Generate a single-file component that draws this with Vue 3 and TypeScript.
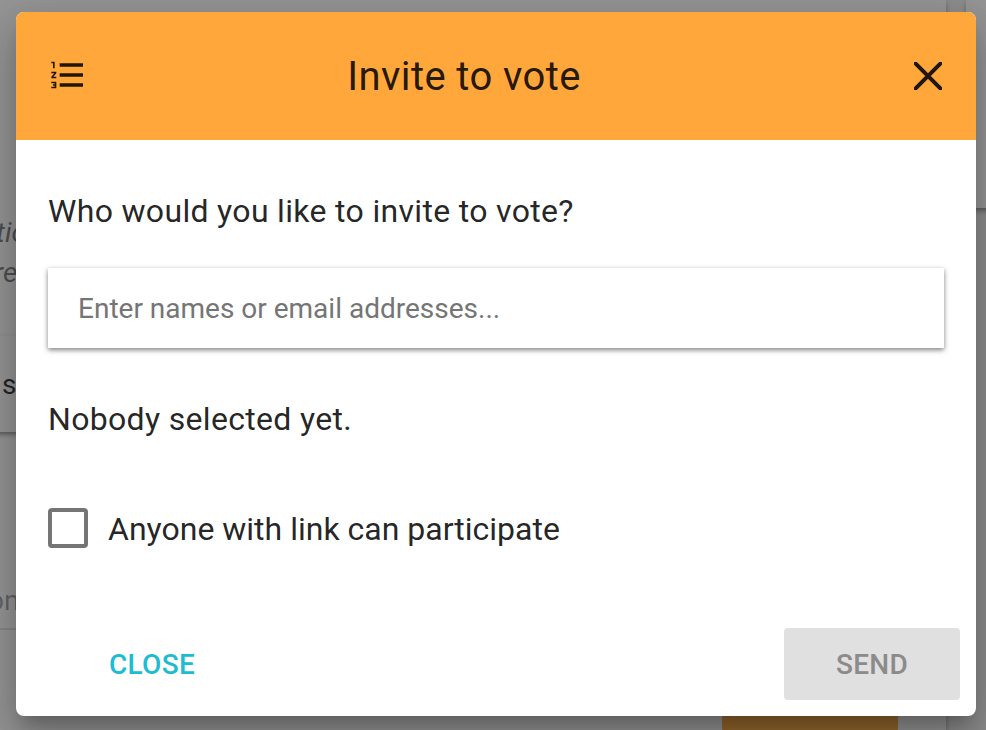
<script setup lang="ts">
import { ref } from 'vue'

const query = ref('')
const anyoneWithLink = ref(false)
</script>

<template>
  <main class="screen">
    <div class="page" aria-hidden="true">
      <section class="panel panel-main">
        <span class="snippet italic line-one">tio</span>
        <span class="snippet italic line-two">re</span>
        <div class="inner-card"><span>s</span></div>
        <div class="field">on</div>
        <div class="page-button"></div>
      </section>
      <section class="panel panel-side"></section>
    </div>
    <div class="backdrop"></div>

    <section class="dialog" role="dialog" aria-labelledby="dialog-title">
      <header class="toolbar">
        <svg class="list-icon" viewBox="0 0 24 24" aria-hidden="true">
          <path d="M2 17h2v.5H3v1h1v.5H2v1h3v-4H2v1zm1-9h1V4H2v1h1v3zm-1 3h1.8L2 13.1v.9h3v-1H3.2L5 10.9V10H2v1zm5-6v2h14V5H7zm0 14h14v-2H7v2zm0-6h14v-2H7v2z" />
        </svg>
        <h2 id="dialog-title">Invite to vote</h2>
        <button class="close-icon" type="button" aria-label="Close">
          <svg viewBox="0 0 28 28"><path d="M1.2 1.2 26.8 26.8M26.8 1.2 1.2 26.8" /></svg>
        </button>
      </header>

      <div class="content">
        <p class="question">Who would you like to invite to vote?</p>
        <input v-model="query" class="search" type="text" placeholder="Enter names or email addresses..." />
        <p class="selection">Nobody selected yet.</p>
        <label class="option">
          <input v-model="anyoneWithLink" type="checkbox" />
          <span>Anyone with link can participate</span>
        </label>
      </div>

      <footer class="actions">
        <button class="close" type="button">CLOSE</button>
        <button class="send" type="button" disabled>SEND</button>
      </footer>
    </section>
  </main>
</template>

<style>
body {
  margin: 0;
  overflow: hidden;
}
</style>

<style scoped>
.screen {
  position: relative;
  box-sizing: border-box;
  width: 986px;
  height: 730px;
  padding: 12px 10px 14px 16px;
  overflow: hidden;
  background: #fafafa;
  font-family: Roboto, sans-serif;
  color: rgba(0, 0, 0, 0.87);
}

.page,
.backdrop {
  position: absolute;
  inset: 0;
}

.page {
  display: flex;
  gap: 20px;
  background: #f0f0f0;
}

.panel {
  background: #fff;
  box-shadow: 0 2px 6px rgba(0, 0, 0, 0.2), 0 4px 4px rgba(0, 0, 0, 0.14), 0 6px 2px -4px rgba(0, 0, 0, 0.12);
}

.panel-main {
  position: relative;
  flex: 0 0 946px;
}

.panel-side {
  flex: 0 0 60px;
  height: 208px;
}

.snippet {
  position: absolute;
  font-size: 28px;
  line-height: 40px;
  color: rgba(0, 0, 0, 0.55);
}

.italic {
  font-style: italic;
}

.line-one {
  top: 213px;
  left: -4px;
}

.line-two {
  top: 253px;
  left: -6px;
}

.inner-card {
  position: absolute;
  top: 336px;
  left: -20px;
  width: 300px;
  height: 96px;
  box-sizing: border-box;
  padding-left: 22px;
  font-size: 28px;
  line-height: 98px;
  background: #fff;
  box-shadow: 0 2px 6px rgba(0, 0, 0, 0.2), 0 4px 4px rgba(0, 0, 0, 0.14), 0 6px 2px -4px rgba(0, 0, 0, 0.12);
}

.field {
  position: absolute;
  top: 576px;
  left: -12px;
  width: 300px;
  height: 52px;
  border-bottom: 2px solid rgba(0, 0, 0, 0.12);
  font-size: 28px;
  line-height: 50px;
  color: rgba(0, 0, 0, 0.38);
}

.page-button {
  position: absolute;
  top: 660px;
  left: 722px;
  width: 176px;
  height: 72px;
  border-radius: 4px;
  background: #ffa73a;
}

.backdrop {
  background: rgba(33, 33, 33, 0.48);
}

.dialog {
  position: relative;
  display: flex;
  flex-direction: column;
  height: 704px;
  overflow: hidden;
  border-radius: 8px;
  background: #fff;
  box-shadow: 0 14px 16px -8px rgba(0, 0, 0, 0.2), 0 26px 38px 4px rgba(0, 0, 0, 0.14), 0 10px 48px 8px rgba(0, 0, 0, 0.12);
}

.toolbar {
  display: grid;
  flex: 0 0 128px;
  grid-template-columns: 40px 1fr 40px;
  align-items: center;
  box-sizing: border-box;
  padding: 0 28px 0 32px;
  background: #ffa73a;
}

.list-icon {
  width: 40px;
  height: 40px;
  margin-top: -2px;
  fill: rgba(0, 0, 0, 0.87);
}

h2 {
  margin: 0;
  padding: 2px 68px 0 0;
  text-align: center;
  font-size: 40px;
  font-weight: 400;
  line-height: 64px;
  letter-spacing: 0.4px;
}

button {
  border: 0;
  font-family: inherit;
}

.close-icon {
  display: flex;
  align-items: center;
  justify-content: center;
  width: 40px;
  height: 40px;
  padding: 0;
  background: none;
}

.close-icon svg {
  width: 28px;
  height: 28px;
  fill: none;
  stroke: #211608;
  stroke-width: 4;
  stroke-linecap: round;
}

.content {
  display: flex;
  flex: 1;
  flex-direction: column;
  padding: 48px 32px 0;
  font-size: 32px;
  line-height: 46px;
  letter-spacing: 0.32px;
}

p {
  margin: 0;
}

.search {
  box-sizing: border-box;
  width: 100%;
  height: 80px;
  margin: 34px 0 48px;
  padding: 0 30px;
  border: 0;
  outline: 0;
  background: #fff;
  box-shadow: 0 2px 5px rgba(0, 0, 0, 0.5);
  font: 400 28px Roboto, sans-serif;
}

.search::placeholder {
  color: #757575;
  opacity: 1;
}

.option {
  display: flex;
  align-items: center;
  gap: 20px;
  margin-top: 64px;
  letter-spacing: normal;
}

.option input {
  appearance: none;
  box-sizing: border-box;
  width: 40px;
  height: 40px;
  margin: 0 0 2px;
  border: 4px solid #757575;
  border-radius: 4px;
}

.actions {
  display: flex;
  align-items: center;
  justify-content: space-between;
  padding: 0 16px 16px;
}

.actions button {
  height: 72px;
  padding: 0;
  border-radius: 4px;
  font-size: 28px;
  font-weight: 500;
  letter-spacing: 0.28px;
}

.close {
  width: 176px;
  margin-left: 32px;
  background: transparent;
  color: #1dbcd4;
}

.send {
  width: 176px;
  background: #e0e0e0;
  color: #8b8b8b;
}
</style>
